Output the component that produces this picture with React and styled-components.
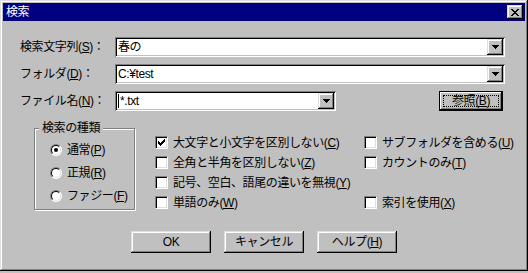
import React from 'react'
import styled, { createGlobalStyle } from 'styled-components'

const GlobalStyle = createGlobalStyle`
  html, body {
    margin: 0;
    padding: 0;
    background: #c0c0c0;
  }
  body {
    font-family: "Liberation Sans", "Noto Sans CJK JP", sans-serif;
    font-size: 12px;
    letter-spacing: -0.4px;
    color: #000;
  }
`

const raised = `
  box-shadow: inset -1px -1px #000, inset 1px 1px #dfdfdf,
    inset -2px -2px #808080, inset 2px 2px #fff;
`

const Window = styled.div`
  box-sizing: border-box;
  width: 528px;
  height: 271px;
  padding: 3px;
  background: #c0c0c0;
  display: flex;
  flex-direction: column;
  ${raised}
`

const TitleBar = styled.div`
  height: 18px;
  background: #000080;
  color: #fff;
  display: flex;
  align-items: center;
  justify-content: space-between;
  padding: 0 2px;
`

const Title = styled.span`
  line-height: 18px;
  padding-left: 1px;
`

const CloseButton = styled.div`
  box-sizing: border-box;
  width: 16px;
  height: 14px;
  background: #c0c0c0;
  display: flex;
  align-items: center;
  justify-content: center;
  ${raised}
`

const Form = styled.div`
  display: grid;
  grid-template-columns: 95px 1fr;
  grid-auto-rows: 20px;
  row-gap: 7px;
  align-items: center;
  padding: 16px 20px 0 17px;
`

const Label = styled.span`
  line-height: 20px;
  white-space: nowrap;
`

const Key = styled.span`
  text-decoration: underline;
  text-underline-offset: 1px;
`

const FieldRow = styled.div`
  display: flex;
  align-items: center;
  justify-content: space-between;
`

const Combo = styled.div`
  box-sizing: border-box;
  width: ${p => (p.$width ? `${p.$width}px` : '100%')};
  height: 20px;
  padding: 2px;
  background: #fff;
  display: flex;
  box-shadow: inset 1px 1px #808080, inset -1px -1px #fff,
    inset 2px 2px #000, inset -2px -2px #c0c0c0;
`

const ComboText = styled.span`
  flex: 1;
  display: flex;
  align-items: center;
  padding-left: 1px;
  line-height: 16px;
  white-space: nowrap;
`

const Caret = styled.span`
  width: 1px;
  height: 14px;
  background: #000;
  margin-right: 1px;
`

const ArrowButton = styled.div`
  box-sizing: border-box;
  width: 16px;
  height: 16px;
  background: #c0c0c0;
  display: flex;
  align-items: center;
  justify-content: center;
  ${raised}
`

const Button = styled.div`
  position: relative;
  box-sizing: border-box;
  width: ${p => p.$width}px;
  height: ${p => p.$height}px;
  margin-right: ${p => p.$gapRight || 0}px;
  background: #c0c0c0;
  display: flex;
  align-items: center;
  justify-content: center;
  line-height: 14px;
  ${p =>
    p.$default
      ? `
    border: 1px solid #000;
    box-shadow: inset -1px -1px #000, inset 1px 1px #fff, inset -2px -2px #808080;
    &::after {
      content: '';
      position: absolute;
      inset: 3px;
      border: 1px dotted #000;
    }
  `
      : raised}
`

const Lower = styled.div`
  display: flex;
  align-items: flex-start;
  margin-top: 17px;
  padding-left: 31px;
`

const GroupBox = styled.div`
  position: relative;
  box-sizing: border-box;
  width: 101px;
  height: 82px;
  border: 1px solid #808080;
  box-shadow: inset 1px 1px #fff, 1px 1px #fff;
  padding: 15px 0 0 15px;
  display: flex;
  flex-direction: column;
  gap: 11px;
`

const GroupTitle = styled.span`
  position: absolute;
  top: -7px;
  left: 4px;
  padding: 0 3px;
  background: #c0c0c0;
  line-height: 13px;
`

const Option = styled.div`
  display: flex;
  align-items: center;
  gap: 5px;
  height: 12px;
  line-height: 14px;
  white-space: nowrap;
`

const Radio = styled.span`
  position: relative;
  box-sizing: border-box;
  flex: none;
  width: 12px;
  height: 12px;
  border-radius: 50%;
  background: #fff;
  border: 1px solid;
  border-color: #808080 #fff #fff #808080;
  &::before {
    content: '';
    position: absolute;
    inset: 0;
    border-radius: 50%;
    border: 1px solid;
    border-color: #000 #dfdfdf #dfdfdf #000;
  }
  &::after {
    content: '';
    display: ${p => (p.$checked ? 'block' : 'none')};
    position: absolute;
    left: 3px;
    top: 3px;
    width: 4px;
    height: 4px;
    border-radius: 50%;
    background: #000;
  }
`

const CheckGrid = styled.div`
  display: grid;
  grid-template-columns: 209px auto;
  grid-auto-rows: 13px;
  row-gap: 7px;
  margin: 8px 0 0 20px;
`

const Check = styled.span`
  box-sizing: border-box;
  flex: none;
  width: 13px;
  height: 13px;
  background: #fff;
  border: 1px solid;
  border-color: #808080 #fff #fff #808080;
  box-shadow: inset 1px 1px #000, inset -1px -1px #dfdfdf;
  display: flex;
  align-items: center;
  justify-content: center;
`

const CheckRow = styled(Option)`
  height: 13px;
`

const ButtonRow = styled.div`
  display: flex;
  justify-content: center;
  gap: 13px;
  margin-top: 21px;
`

const checkPixels = [[6, 0, 1], [5, 1, 2], [0, 2, 1], [4, 2, 3], [0, 3, 2], [3, 3, 3], [0, 4, 5], [1, 5, 3], [2, 6, 1]]

const CheckMark = () => (
  <svg width="7" height="7" viewBox="0 0 7 7" shapeRendering="crispEdges">
    {checkPixels.map(([x, y, w], i) => (
      <rect key={i} x={x} y={y} width={w} height="1" fill="#000" />
    ))}
  </svg>
)

const CloseGlyph = () => (
  <svg width="8" height="7" viewBox="0 0 8 7" shapeRendering="crispEdges">
    {[[0, 0], [1, 1], [2, 2], [3, 3], [2, 4], [1, 5], [0, 6]].map(([x, y], i) => (
      <rect key={i} x={x} y={y} width="2" height="1" fill="#000" />
    ))}
    {[[6, 0], [5, 1], [4, 2], [4, 4], [5, 5], [6, 6]].map(([x, y], i) => (
      <rect key={'r' + i} x={x} y={y} width="2" height="1" fill="#000" />
    ))}
  </svg>
)

const Arrow = () => (
  <svg width="7" height="4" viewBox="0 0 7 4" shapeRendering="crispEdges">
    <rect x="0" y="0" width="7" height="1" fill="#000" />
    <rect x="1" y="1" width="5" height="1" fill="#000" />
    <rect x="2" y="2" width="3" height="1" fill="#000" />
    <rect x="3" y="3" width="1" height="1" fill="#000" />
  </svg>
)

const Mn = ({ text, k, colon }) => (
  <>
    {text}(<Key>{k}</Key>){colon ? '：' : ''}
  </>
)

const ComboBox = ({ value, width, caret }) => (
  <Combo $width={width}>
    <ComboText>
      {caret && <Caret />}
      {value}
    </ComboText>
    <ArrowButton>
      <Arrow />
    </ArrowButton>
  </Combo>
)

const CheckItem = ({ text, k, checked }) => (
  <CheckRow>
    <Check>{checked && <CheckMark />}</Check>
    <span>
      <Mn text={text} k={k} />
    </span>
  </CheckRow>
)

const RadioItem = ({ text, k, checked }) => (
  <Option>
    <Radio $checked={checked} />
    <span>
      <Mn text={text} k={k} />
    </span>
  </Option>
)

export default function App() {
  return (
    <>
      <GlobalStyle />
      <Window>
        <TitleBar>
          <Title>検索</Title>
          <CloseButton>
            <CloseGlyph />
          </CloseButton>
        </TitleBar>

        <Form>
          <Label>
            <Mn text="検索文字列" k="S" colon />
          </Label>
          <ComboBox value="春の" />
          <Label>
            <Mn text="フォルダ" k="D" colon />
          </Label>
          <ComboBox value="C:¥test" />
          <Label>
            <Mn text="ファイル名" k="N" colon />
          </Label>
          <FieldRow>
            <ComboBox value="*.txt" width={221} caret />
            <Button $default $width={64} $height={20} $gapRight={2}>
              <Mn text="参照" k="B" />
            </Button>
          </FieldRow>
        </Form>

        <Lower>
          <GroupBox>
            <GroupTitle>検索の種類</GroupTitle>
            <RadioItem text="通常" k="P" checked />
            <RadioItem text="正規" k="R" />
            <RadioItem text="ファジー" k="F" />
          </GroupBox>
          <CheckGrid>
            <CheckItem text="大文字と小文字を区別しない" k="C" checked />
            <CheckItem text="サブフォルダを含める" k="U" />
            <CheckItem text="全角と半角を区別しない" k="Z" />
            <CheckItem text="カウントのみ" k="T" />
            <CheckItem text="記号、空白、語尾の違いを無視" k="Y" />
            <span />
            <CheckItem text="単語のみ" k="W" />
            <CheckItem text="索引を使用" k="X" />
          </CheckGrid>
        </Lower>

        <ButtonRow>
          <Button $width={80} $height={22}>OK</Button>
          <Button $width={80} $height={22}>キャンセル</Button>
          <Button $width={80} $height={22}>
            <Mn text="ヘルプ" k="H" />
          </Button>
        </ButtonRow>
      </Window>
    </>
  )
}
